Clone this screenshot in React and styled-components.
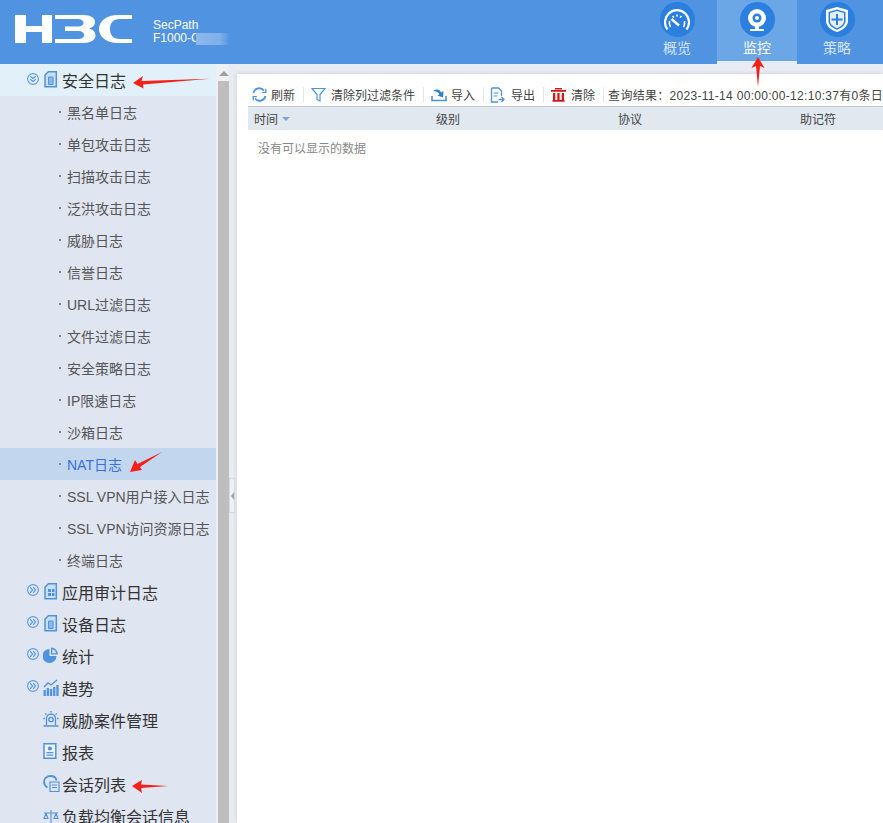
import React from "react";
import styled, { createGlobalStyle } from "styled-components";

const Global = createGlobalStyle`
  html, body { margin: 0; padding: 0; height: 100%; overflow: hidden; }
  body { font-family: "Liberation Sans", "Noto Sans CJK SC", sans-serif; background: #e9ebf2; }
`;
const Page = styled.div`
  position: relative;
  width: 883px;
  height: 823px;
  overflow: hidden;
  display: flex;
  flex-direction: column;
`;
const Header = styled.header`
  height: 64px;
  flex: none;
  background: #5093e1;
  display: flex;
  align-items: flex-start;
`;
const Logo = styled.svg`
  margin: 15px 0 0 15px;
  flex: none;
`;
const Product = styled.div`
  margin: 19px 0 0 21px;
  color: #fff;
  font-size: 12px;
  line-height: 13px;
  width: 76px;
  position: relative;
`;
const Blur = styled.span`
  position: absolute;
  left: 43px;
  bottom: 0;
  width: 34px;
  height: 12px;
  background: linear-gradient(90deg, #8db8ec, #7fb0ea 70%, #5093e1);
`;
const Tabs = styled.nav`
  margin-left: auto;
  display: flex;
  padding-right: 6px;
`;
const Tab = styled.div`
  width: 80px;
  height: 64px;
  box-sizing: border-box;
  display: flex;
  flex-direction: column;
  align-items: center;
  padding-top: 2px;
  gap: 3px;
  font-size: 14px;
  line-height: 16px;
  color: ${(p) => (p.$active ? "#fff" : "#d5e4f6")};
  background: ${(p) => (p.$active ? "#6ba6e7" : "transparent")};
  border-bottom: 3px solid ${(p) => (p.$active ? "#e4edf9" : "transparent")};
`;
const Round = styled.div`
  width: 35px;
  height: 35px;
  border-radius: 50%;
  background: #2a7fdf;
  display: flex;
  align-items: center;
  justify-content: center;
`;
const Body = styled.div`
  flex: 1;
  display: flex;
  min-height: 0;
`;
const Sidebar = styled.aside`
  width: 216px;
  flex: none;
  background: #dfe5f1;
  overflow: hidden;
`;
const Row = styled.div`
  height: 32px;
  display: flex;
  align-items: center;
  white-space: nowrap;
  box-sizing: border-box;
`;
const TopRow = styled(Row)`
  padding-left: 62px;
  position: relative;
  font-size: 16px;
  color: #333;
  background: ${(p) => (p.$open ? "#e2f0f9" : "transparent")};
`;
const Chevron = styled.svg`
  position: absolute;
  left: 27px;
  top: ${(p) => (p.$open ? 9 : 8)}px;
`;
const NavIcon = styled.svg`
  position: absolute;
  left: 43px;
  top: ${(p) => p.$top || 7}px;
`;
const SubRow = styled(Row)`
  padding-left: 67px;
  position: relative;
  font-size: 14px;
  color: ${(p) => (p.$active ? "#3a70dc" : "#555")};
  background: ${(p) => (p.$active ? "#c2d6ee" : "transparent")};
  &::before {
    content: "";
    position: absolute;
    left: 59px;
    top: 15px;
    width: 2px;
    height: 2px;
    background: #5b8fc9;
  }
`;
const Scrollbar = styled.div`
  width: 13px;
  flex: none;
  box-sizing: border-box;
  padding-left: 2px;
  background: #eff0f3;
  display: flex;
  flex-direction: column;
  align-items: center;
`;
const ScrollUp = styled.div`
  margin-top: 7px;
  width: 0;
  height: 0;
  border: 5px solid transparent;
  border-top: 0;
  border-bottom: 5px solid #a0a0a0;
`;
const Thumb = styled.div`
  margin-top: 5px;
  align-self: stretch;
  flex: 1;
  background: #bebebe;
`;
const Splitter = styled.div`
  width: 8px;
  flex: none;
  position: relative;
`;
const SplitHandle = styled.div`
  position: absolute;
  left: 0;
  top: 414px;
  width: 6px;
  height: 35px;
  box-sizing: border-box;
  border: 1px solid #d5d9ea;
  background: #eff1f6;
  display: flex;
  align-items: center;
  justify-content: center;
  &::after {
    content: "";
    border: 4px solid transparent;
    border-left: 0;
    border-right: 3px solid #a5a5a5;
  }
`;
const Main = styled.main`
  flex: 1;
  margin-top: 10px;
  background: #fff;
  min-width: 0;
  padding-left: 11px;
  overflow: hidden;
  box-shadow: -1px -1px 3px rgba(120, 125, 140, 0.18);
`;
const Toolbar = styled.div`
  height: 23px;
  padding-top: 9px;
  display: flex;
  align-items: center;
  font-size: 12px;
  color: #444;
  white-space: nowrap;
  border-bottom: 1px solid #c5c8cc;
  box-sizing: content-box;
`;
const Tool = styled.div`
  display: flex;
  align-items: center;
  gap: ${(p) => p.$gap || 4}px;
  padding-left: ${(p) => p.$pad || 4}px;
  padding-right: 8px;
  border-right: 1px solid #e4e6ea;
  height: 15px;
`;
const Result = styled.div`
  margin-left: 4px;
  letter-spacing: 0.3px;
  flex: none;
`;
const Columns = styled.div`
  height: 23px;
  background: #e1e8f0;
  display: grid;
  grid-template-columns: repeat(4, 182px);
  align-items: center;
  font-size: 12px;
  color: #444;
`;
const Col = styled.div`
  padding-left: 6px;
  display: flex;
  align-items: center;
  gap: 4px;
`;
const SortArrow = styled.i`
  width: 0;
  height: 0;
  border: 4px solid transparent;
  border-bottom: 0;
  border-top: 4px solid #7ba7d7;
`;
const Empty = styled.div`
  padding: 11px 0 0 10px;
  font-size: 12px;
  line-height: 16px;
  color: #888;
`;
const Arrow = styled.svg`
  position: absolute;
  left: ${(p) => p.$x}px;
  top: ${(p) => p.$y}px;
  pointer-events: none;
`;

const blue = "#4f93dc";

function H3CLogo() {
  return (
    <Logo width="117" height="28" viewBox="0 0 117 28" fill="#fff">
      <path d="M0 0H11V11H27V0H37V28H27V17H11V28H0Z" />
      <path d="M40 0H68C76 0 80 3 80 7C80 10 78 12.500 74 13.500C78 14.500 80.500 17 80.500 20.500C80.500 25 76 28 68 28H40V24H62C67 24 69 22.500 69 20C69 17.500 67 16 62 16H50V11.500H62C66.500 11.500 68.500 10 68.500 8C68.500 5.500 66 4 62 4H40Z" />
      <path d="M117 0H103C92 0 84 6 84 14C84 22 92 28 103 28H117V24H105C98 24 95 20 95 14C95 8 98 4 105 4H117Z" />
    </Logo>
  );
}

function GaugeIcon() {
  return (
    <svg width="26" height="22" viewBox="0 0 26 22" fill="none" stroke="#fff">
      <path d="M3.500 20.500A12 12 0 1 1 22.500 20.500" strokeWidth="2.200" />
      <path d="M6.500 18A8.500 8.500 0 0 1 5.500 12M8.500 7l1.500 1.500M13 5.500v2M17.500 7L16 8.500" strokeWidth="1.600" />
      <path d="M7.500 10L15 16.500" strokeWidth="2.400" />
      <path d="M19.500 18A8.500 8.500 0 0 0 20.500 12" strokeWidth="1.600" />
    </svg>
  );
}

function CameraIcon() {
  return (
    <svg width="22" height="24" viewBox="0 0 22 24" fill="none">
      <circle cx="11" cy="10" r="9" fill="#fff" />
      <circle cx="11" cy="10" r="4.500" fill="#2a7fdf" />
      <circle cx="11" cy="10" r="2" fill="#fff" />
      <path d="M9 18h4v3H9zM4 21h14v2H4z" fill="#fff" />
    </svg>
  );
}

function ShieldIcon() {
  return (
    <svg width="24" height="27" viewBox="0 0 24 27">
      <path d="M12 1 23 4v11c0 5-5 9-11 11C6 24 1 20 1 15V4z" fill="#fff" />
      <path d="M12 3.500 20.500 6v9c0 4-4 7-8.500 8.800C7.500 22 3.500 19 3.500 15V6z" fill="#2a7fdf" />
      <path d="M12 5 19 7v8c0 3-3 5.500-7 7.200C8 20.500 5 18 5 15V7z" fill="#e6eff9" />
      <path d="M11 8h2v4.500h4.500v2H13V19h-2v-4.500H6.500v-2H11z" fill="#2a7fdf" />
    </svg>
  );
}

function ChevronIcon({ open }) {
  return (
    <Chevron $open={open} width="12" height="12" viewBox="0 0 12 12" fill="none" stroke="#5a9be6">
      <circle cx="6" cy="6" r="5.400" strokeWidth="1.100" />
      {open ? (
        <path d="M3.200 3.200 6 5.500 8.800 3.200M3.200 6.200 6 8.500 8.800 6.200" strokeWidth="1.200" />
      ) : (
        <path d="M3.200 3.200 5.500 6 3.200 8.800M6.200 3.200 8.500 6 6.200 8.800" strokeWidth="1.200" />
      )}
    </Chevron>
  );
}

function DocIcon({ inner }) {
  return (
    <NavIcon width="14" height="17" viewBox="0 0 14 17" style={{ marginLeft: 1 }}>
      <path d="M4.500 0.800H12.300V15.800H1V4z" fill="#cbdef3" stroke={blue} strokeWidth="1.500" />
      {inner === "grid" ? (
        <path d="M4 6h3v3H4zM8 6h2.500v3H8zM4 10h3v3H4zM8 10h2.500v3H8z" fill={blue} />
      ) : (
        <path d="M4.500 6h4.500v7.500H4.500z" fill="#8bb8ea" stroke={blue} strokeWidth="1" />
      )}
    </NavIcon>
  );
}

function PieIcon() {
  return (
    <NavIcon width="15" height="16" viewBox="0 0 15 16">
      <path d="M6.500 2V9H13.500A7 7 0 1 1 6.500 2z" fill={blue} />
      <path d="M8 0.500A7 7 0 0 1 14.800 7.500H8z" fill={blue} />
      <path d="M9.300 2.300V6.200H13.200A5.400 5.400 0 0 0 9.300 2.300z" fill="#dfe5f1" />
    </NavIcon>
  );
}

function TrendIcon() {
  return (
    <NavIcon width="16" height="17" viewBox="0 0 16 17">
      <path d="M0.500 11h2.300v6H0.500zM3.700 9h2.300v8H3.700zM6.900 10h2.300v7H6.900zM10.100 8h2.300v9h-2.300zM13.300 6h2.300v11h-2.300z" fill={blue} />
      <path d="M1 8 5 4 8 6 14 1" fill="none" stroke={blue} strokeWidth="1.400" />
    </NavIcon>
  );
}

function AlarmIcon() {
  return (
    <NavIcon width="16" height="16" viewBox="0 0 16 16" fill="none" stroke={blue}>
      <path d="M3.500 14V7.500a4.500 4.500 0 0 1 9 0V14" strokeWidth="1.300" />
      <circle cx="8" cy="8.500" r="2.200" strokeWidth="1.300" />
      <path d="M0.500 15h15M8 0v1.500M2 2.500l1.500 1M14 2.500l-1.500 1M0.500 7.500H2M14 7.500h1.500" strokeWidth="1.300" />
    </NavIcon>
  );
}

function ReportIcon() {
  return (
    <NavIcon width="14" height="16" viewBox="0 0 14 16">
      <path d="M1 0.800h11.800v14.500H1z" fill="#eef3fa" stroke={blue} strokeWidth="1.500" />
      <circle cx="6.900" cy="5.500" r="2" fill={blue} />
      <path d="M3.500 9h6.800v1.300H3.500zM3.500 11.500h6.800v1.300H3.500z" fill={blue} />
    </NavIcon>
  );
}

function SessionIcon() {
  return (
    <NavIcon width="17" height="17" viewBox="0 0 17 17" fill="none" stroke={blue}>
      <path d="M4.500 12.500C2 11 1 9 1 6.800 1 3.500 4 1 7.500 1c3 0 5.500 1.700 6 4.500" strokeWidth="1.800" />
      <path d="M7 7h9v9.500H7z" fill="#dfe5f1" strokeWidth="1.200" />
      <path d="M9 10h5M9 12.500h5" strokeWidth="1" />
    </NavIcon>
  );
}

function ScaleIcon() {
  return (
    <NavIcon $top={9} width="16" height="16" viewBox="0 0 16 16" fill="none" stroke={blue}>
      <path d="M8 1v13M1 4h14M4.500 14.500h7M3 4.500 1 9.500h4zM13 4.500 11 9.500h4z" strokeWidth="1.100" />
    </NavIcon>
  );
}

function RefreshIcon() {
  return (
    <svg width="15" height="15" viewBox="0 0 15 15" fill="none" stroke="#4f93dc" strokeWidth="1.800">
      <path d="M1.500 6A6 6 0 0 1 12 3.500" />
      <path d="M13.500 9A6 6 0 0 1 3 11.500" />
      <path d="M13.800 1.800v3.600h-3.600" strokeWidth="1.300" />
      <path d="M1.200 13.200V9.600h3.600" strokeWidth="1.300" />
    </svg>
  );
}

function FilterIcon() {
  return (
    <svg width="15" height="15" viewBox="0 0 15 15" fill="none" stroke="#4f93dc" strokeWidth="1.200">
      <path d="M1 1.500h13L9 7.500v6.500L6 12.500v-5z" />
    </svg>
  );
}

function ImportIcon() {
  return (
    <svg width="16" height="14" viewBox="0 0 16 14" fill="none">
      <path d="M1 8v4.500h14V8" stroke="#4f93dc" strokeWidth="1.600" />
      <path d="M2 3c4-2.500 7-1.500 8 1.500L12.500 3 12 9.500 6.500 7.500 8.500 6C7 4 5 3 2 3z" fill="#2f7fd0" />
    </svg>
  );
}

function ExportIcon() {
  return (
    <svg width="15" height="16" viewBox="0 0 15 16" fill="none" stroke="#4f93dc">
      <path d="M1.500 1h7l3 3v5M8 15H1.500V1" strokeWidth="1.300" />
      <path d="M3.500 6h5M3.500 9h4" strokeWidth="1" />
      <path d="M8.500 12.500h5M11.500 10l2.500 2.500-2.500 2.500" strokeWidth="1.300" />
    </svg>
  );
}

function TrashIcon() {
  return (
    <svg width="15" height="15" viewBox="0 0 15 15">
      <path d="M0 3h15v1.800H0zM4 1h7v1.400H4zM2 6h2.300v7.200H2zM6.300 6h2.300v7.200H6.300zM10.700 6H13v7.200h-2.300zM1.500 13h12v1.800h-12z" fill="#cf1a1a" />
    </svg>
  );
}

// red annotation arrows, drawn over the page
function Annotations() {
  return (
    <>
      <Arrow $x={132} $y={74} width="80" height="16" viewBox="0 0 80 16">
        <path d="M1 9 11 2 9.500 7 78 4.700 11 10.500 11.500 14.500z" fill="#f5201a" />
      </Arrow>
      <Arrow $x={131} $y={778} width="38" height="16" viewBox="0 0 38 16">
        <path d="M1 8 11 2 10 6.500 37 8 10 10 11 15z" fill="#f5201a" />
      </Arrow>
      <Arrow $x={129} $y={451} width="34" height="24" viewBox="0 0 34 24">
        <path d="M1 21 6 9 8.500 13 33 1 11 16 13 19z" fill="#f5201a" />
      </Arrow>
      <Arrow $x={751} $y={56} width="14" height="32" viewBox="0 0 14 32">
        <path d="M7 1 13.500 12 9 10 7 31 5 10 0.500 12z" fill="#f5201a" />
      </Arrow>
    </>
  );
}

const subItems = [
  "黑名单日志", "单包攻击日志", "扫描攻击日志", "泛洪攻击日志", "威胁日志", "信誉日志",
  "URL过滤日志", "文件过滤日志", "安全策略日志", "IP限速日志", "沙箱日志", "NAT日志",
  "SSL VPN用户接入日志", "SSL VPN访问资源日志", "终端日志",
];

export default function App() {
  return (
    <Page>
      <Global />
      <Header>
        <H3CLogo />
        <Product>
          SecPath
          <br />
          F1000-C
          <Blur />
        </Product>
        <Tabs>
          <Tab><Round><GaugeIcon /></Round>概览</Tab>
          <Tab $active><Round><CameraIcon /></Round>监控</Tab>
          <Tab><Round><ShieldIcon /></Round>策略</Tab>
        </Tabs>
      </Header>
      <Body>
        <Sidebar>
          <TopRow $open><ChevronIcon open /><DocIcon />安全日志</TopRow>
          {subItems.map((t) => (
            <SubRow key={t} $active={t === "NAT日志"}>{t}</SubRow>
          ))}
          <TopRow><ChevronIcon /><DocIcon inner="grid" />应用审计日志</TopRow>
          <TopRow><ChevronIcon /><DocIcon />设备日志</TopRow>
          <TopRow><ChevronIcon /><PieIcon />统计</TopRow>
          <TopRow><ChevronIcon /><TrendIcon />趋势</TopRow>
          <TopRow><AlarmIcon />威胁案件管理</TopRow>
          <TopRow><ReportIcon />报表</TopRow>
          <TopRow><SessionIcon />会话列表</TopRow>
          <TopRow><ScaleIcon />负载均衡会话信息</TopRow>
        </Sidebar>
        <Scrollbar>
          <ScrollUp />
          <Thumb />
        </Scrollbar>
        <Splitter><SplitHandle /></Splitter>
        <Main>
          <Toolbar>
            <Tool $pad={4}><RefreshIcon />刷新</Tool>
            <Tool $pad={7} $gap={5}><FilterIcon />清除列过滤条件</Tool>
            <Tool $pad={7} $gap={4}><ImportIcon />导入</Tool>
            <Tool $pad={6} $gap={6}><ExportIcon />导出</Tool>
            <Tool $pad={7} $gap={5}><TrashIcon />清除</Tool>
            <Result>查询结果：2023-11-14 00:00:00-12:10:37有0条日志</Result>
          </Toolbar>
          <Columns>
            <Col>时间<SortArrow /></Col>
            <Col>级别</Col>
            <Col>协议</Col>
            <Col>助记符</Col>
          </Columns>
          <Empty>没有可以显示的数据</Empty>
        </Main>
      </Body>
      <Annotations />
    </Page>
  );
}
